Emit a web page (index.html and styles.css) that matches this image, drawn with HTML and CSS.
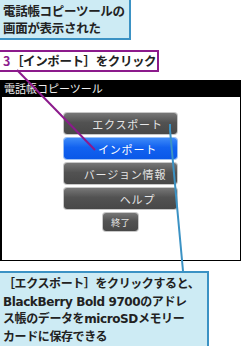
FILE: index.html
```html
<!DOCTYPE html>
<html lang="ja">
<head>
    <meta charset="UTF-8">
    <meta name="viewport" content="width=device-width, initial-scale=1.0">
    <title>電話帳コピーツール</title>
    <link rel="stylesheet" href="styles.css">
</head>
<body>
    <div class="page">
        <div class="caption">電話帳コピーツールの<br>画面が表示された</div>

        <div class="step"><span class="step-num">3</span>［インポート］をクリック</div>

        <div class="screen">
            <div class="screen-title">電話帳コピーツール</div>
            <div class="menu">
                <div class="btn btn-export">エクスポート</div>
                <div class="btn btn-active btn-import">インポート</div>
                <div class="btn btn-version">バージョン情報</div>
                <div class="btn btn-help">ヘルプ</div>
                <div class="btn btn-small">終了</div>
            </div>
        </div>

        <div class="note">［エクスポート］をクリックすると、<br>BlackBerry Bold 9700のアドレ<br>ス帳のデータをmicroSDメモリー<br>カードに保存できる</div>

        <svg class="leaders" width="242" height="346" viewBox="0 0 242 346">
            <line x1="17" y1="70" x2="95" y2="150" stroke="#8c1a8c" stroke-width="2"/>
            <polyline points="170,124 170,130 183,271" fill="none" stroke="#3b92c4" stroke-width="2"/>
        </svg>
    </div>
</body>
</html>
```

FILE: styles.css
```css
body {
    margin: 0;
    background-color: #fff;
    font-family: "Noto Sans CJK JP", "Noto Sans", sans-serif;
}
.page {
    position: relative;
    width: 242px;
    height: 346px;
    overflow: hidden;
}
.caption {
    box-sizing: border-box;
    width: 131px;
    height: 40px;
    padding: 2px 0 0 3px;
    background-color: #cdebf4;
    border: 2px solid #3b92c4;
    border-left: none;
    border-top: none;
    font-size: 12.5px;
    font-weight: bold;
    line-height: 17px;
    color: #222;
    letter-spacing: -0.3px;
    white-space: nowrap;
}
.step {
    box-sizing: border-box;
    width: 159px;
    height: 22px;
    margin-top: 10px;
    padding-left: 3px;
    border: 2px solid #8c1a8c;
    border-left: none;
    font-size: 12.5px;
    font-weight: bold;
    line-height: 18px;
    color: #222;
    letter-spacing: -0.4px;
    white-space: nowrap;
}
.step-num {
    color: #8c1a8c;
    margin-right: 1px;
}
.screen {
    box-sizing: border-box;
    width: 241px;
    height: 181px;
    margin-top: 8px;
    border: 1px solid #000;
    border-left-width: 2px;
    border-top: none;
}
.screen-title {
    height: 17px;
    padding-left: 2px;
    background-color: #000;
    color: #eee;
    font-size: 11px;
    line-height: 17px;
}
.menu {
    display: flex;
    flex-direction: column;
    align-items: center;
    gap: 4px;
    padding-top: 16px;
    margin-left: -1px;
}
.btn {
    box-sizing: border-box;
    width: 113px;
    height: 21px;
    display: flex;
    align-items: center;
    justify-content: center;
    border-radius: 3px;
    background: linear-gradient(#777, #525252 45%, #484848);
    box-shadow: 0 0 0 1px #c8c8c8;
    color: #e6e6e6;
    font-size: 11px;
    letter-spacing: 0.8px;
}
.btn-active {
    background: linear-gradient(#3d8af8, #1262f0 45%, #0a58e8);
    box-shadow: 0 0 0 1px #9cc0f4;
    color: #fff;
}
.btn-export,
.btn-import {
    padding-left: 14px;
}
.btn-version {
    padding-left: 9px;
}
.btn-help {
    padding-left: 34px;
}
.btn-small {
    width: 35px;
    height: 18px;
    font-size: 9.5px;
    letter-spacing: 0;
}
.note {
    box-sizing: border-box;
    width: 209px;
    height: 76px;
    margin-top: 10px;
    padding: 3px 0 0 3px;
    background-color: #cdebf4;
    border: 2px solid #3b92c4;
    border-left: none;
    border-bottom: none;
    font-family: "DejaVu Sans", "Noto Sans CJK JP", sans-serif;
    font-size: 12px;
    font-weight: bold;
    line-height: 17.5px;
    color: #222;
    letter-spacing: -0.4px;
    white-space: nowrap;
}
.leaders {
    position: absolute;
    left: 0;
    top: 0;
}
```
